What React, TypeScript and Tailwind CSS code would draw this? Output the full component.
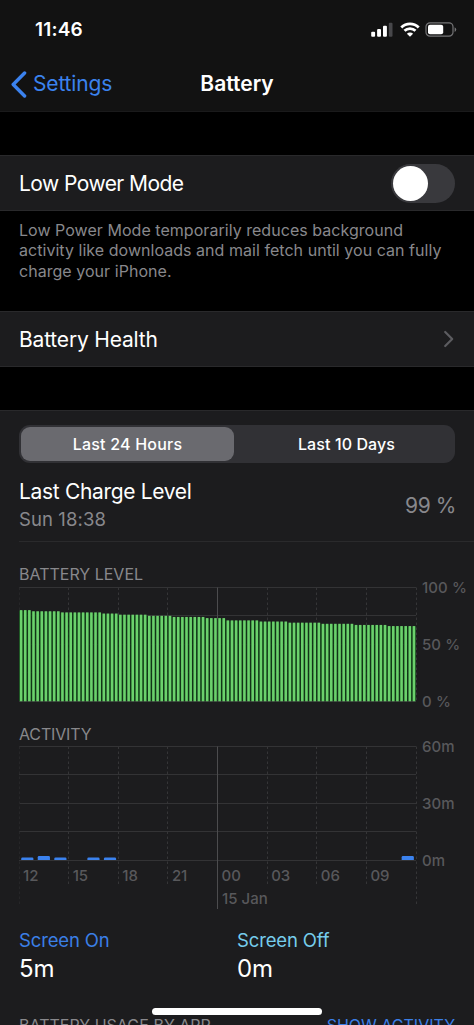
import type { ReactNode } from 'react'

const PLOT_WIDTH = 397
const PLOT_HEIGHT = 114
const HOURS = ['12', '15', '18', '21', '00', '03', '06', '09']

// [level in percent, number of quarter-hour bars]
const LEVELS: [number, number][] = [
  [80, 3],
  [79, 7],
  [78, 10],
  [77, 4],
  [76, 7],
  [75, 6],
  [74, 8],
  [73, 5],
  [71, 8],
  [70, 7],
  [69, 8],
  [68, 8],
  [67, 8],
  [66, 7],
]

const ACTIVITY = [
  { hour: 0, height: 2.4 },
  { hour: 1, height: 4 },
  { hour: 2, height: 2.4 },
  { hour: 4, height: 2.4 },
  { hour: 5, height: 2.4 },
  { hour: 23, height: 4 },
]

const bars = LEVELS.flatMap(([level, count]) =>
  Array.from({ length: count }, () => level),
)

function StatusIcons() {
  return (
    <div className="flex items-center">
      <svg width="22" height="15" viewBox="0 0 22 15" fill="white">
        <rect x="0.2" y="9.7" width="3.9" height="5" rx="1" />
        <rect x="6.1" y="7" width="3.9" height="7.7" rx="1" />
        <rect x="12" y="3.8" width="3.9" height="10.9" rx="1" />
        <rect x="17.8" y="0.7" width="3.7" height="14" rx="1" fill="#47474a" />
      </svg>
      <svg className="ml-[7px]" width="20" height="15" viewBox="0 0 20 15">
        <g fill="none" stroke="white" strokeWidth="2.8">
          <path d="M1.3 5.4a12.3 12.3 0 0 1 17.4 0" />
          <path d="M4.5 8.8a7.8 7.8 0 0 1 11 0" />
        </g>
        <path d="M10 14.8l-3.1-3.1a4.4 4.4 0 0 1 6.2 0z" fill="white" />
      </svg>
      <svg className="ml-[5px]" width="32" height="15" viewBox="0 0 32 15">
        <rect
          x="1"
          y="0.8"
          width="27"
          height="13.4"
          rx="4"
          fill="none"
          stroke="#747476"
          strokeWidth="1.2"
        />
        <rect x="3" y="2.8" width="15.2" height="9.4" rx="2" fill="white" />
        <path d="M29.6 5.2a2.6 2.6 0 0 1 0 4.8z" fill="#747476" />
      </svg>
    </div>
  )
}

function Grid({ tail }: { tail?: boolean }) {
  return (
    <g strokeWidth="1">
      {[0, 1, 2, 3, 4].map((i) => (
        <path
          key={i}
          d={`M0 ${Math.floor((i * PLOT_HEIGHT) / 4) + 0.5}h${PLOT_WIDTH}`}
          stroke="#333335"
        />
      ))}
      {[0, 1, 2, 3, 4, 5, 6, 7, 8].map((i) => {
        const x = Math.floor((i * PLOT_WIDTH) / 8) + 0.5
        const end = !tail
          ? PLOT_HEIGHT
          : i === 4
            ? 163
            : i === 0 || i === 8
              ? 159
              : 140
        return (
          <path
            key={i}
            d={`M${x} 0.5V${end}`}
            stroke={i === 4 ? '#4c4c4e' : i === 0 ? '#262628' : '#353537'}
            strokeDasharray={i === 4 ? undefined : '2.5 2.5'}
          />
        )
      })}
    </g>
  )
}

function AxisLabels({ labels }: { labels: string[] }) {
  return (
    <div className="-mt-2 ml-[5px] flex h-[132px] flex-col justify-between text-[15px] leading-[18px] font-medium tracking-[0.1px] text-[#58585b]">
      {labels.map((label) => (
        <span key={label}>{label}</span>
      ))}
    </div>
  )
}

function Row({ children }: { children: ReactNode }) {
  return (
    <div className="flex h-14 items-center justify-between border-y border-[#29292b] bg-[#1c1c1e] px-[19px] text-[21px] text-white">
      {children}
    </div>
  )
}

function BatteryLevelChart() {
  const pitch = PLOT_WIDTH / bars.length
  return (
    <div className="flex h-[115px]">
      <svg width="398" height="115" viewBox="0 0 398 115">
        <Grid />
        {bars.map((level, i) => {
          const height = (level / 100) * PLOT_HEIGHT
          return (
            <g key={i}>
              <rect
                x={i * pitch}
                y={PLOT_HEIGHT - height + 1}
                width={pitch}
                height={height - 1}
                fill="#103c17"
              />
              <rect
                x={i * pitch + 0.8}
                y={PLOT_HEIGHT - height + 0.3}
                width={2.6}
                height={height}
                fill="#6bd16c"
              />
            </g>
          )
        })}
      </svg>
      <AxisLabels labels={['100 %', '50 %', '0 %']} />
    </div>
  )
}

function ActivityChart() {
  return (
    <div className="relative h-[164px]">
      <svg
        className="absolute top-0 left-0"
        width="398"
        height="164"
        viewBox="0 0 398 164"
      >
        <Grid tail />
        {ACTIVITY.map(({ hour, height }) => {
          const x = (hour * PLOT_WIDTH) / 24 + 2.2
          return (
            <path
              key={hour}
              d={`M${x} 114v${1.2 - height}q0 -1.2 1.2 -1.2h9.8q1.2 0 1.2 1.2v${height - 1.2}z`}
              fill="#3b82ee"
            />
          )
        })}
      </svg>
      <div className="flex h-[121px] pl-[398px]">
        <AxisLabels labels={['60m', '30m', '0m']} />
      </div>
      <div className="grid w-[397px] grid-cols-8 text-[15px] leading-[18px] font-medium text-[#58585b]">
        {HOURS.map((hour) => (
          <span key={hour} className="pl-1">
            {hour}
          </span>
        ))}
      </div>
      <p className="mt-[5px] pl-[203px] text-[15px] leading-[18px] font-medium text-[#58585b]">
        15 Jan
      </p>
    </div>
  )
}

export default function App() {
  return (
    <div className="relative flex h-[1025px] w-[474px] flex-col overflow-hidden bg-black font-['Inter',sans-serif] whitespace-nowrap">
      {/* --- Status bar and title --- */}
      <header className="h-28 shrink-0 border-b border-[#1a1a1b] bg-[#121212]">
        <div className="flex h-[58px] items-center justify-between pr-[17px] pl-[35px]">
          <span className="pt-[2px] text-[19px] font-semibold tracking-[0.2px] text-white">
            11:46
          </span>
          <StatusIcons />
        </div>
        <div className="grid h-[52px] grid-cols-[1fr_auto_1fr] items-center text-[21px]">
          <div className="flex items-center pl-[11px] text-[#3b82ee]">
            <svg
              width="16"
              height="27"
              viewBox="0 0 16 27"
              fill="none"
              stroke="currentColor"
              strokeWidth="3.4"
              strokeLinecap="round"
              strokeLinejoin="round"
            >
              <path d="M13.6 2L2.2 13.5l11.4 11.5" />
            </svg>
            <span className="ml-[6px] tracking-[-0.15px]">Settings</span>
          </div>
          <h1 className="font-semibold text-white">Battery</h1>
        </div>
      </header>

      <main>
        <div className="mt-[43px]">
          <Row>
            <span className="pt-[2px] tracking-[-0.55px]">Low Power Mode</span>
            <div className="flex h-[39px] w-16 items-center rounded-full bg-[#39393d] pl-[2px]">
              <div className="size-[35px] rounded-full bg-white" />
            </div>
          </Row>
        </div>
        <p className="mt-[9px] px-[19px] text-[16px] leading-[20.3px] tracking-[0.04px] text-[#88888c]">
          Low Power Mode temporarily reduces background
          <br />
          activity like downloads and mail fetch until you can fully
          <br />
          charge your iPhone.
        </p>
        <div className="mt-[30px]">
          <Row>
            <span className="pt-[2px] tracking-[-0.18px]">Battery Health</span>
            <svg
              width="12"
              height="18"
              viewBox="0 0 12 18"
              fill="none"
              stroke="#5c5c60"
              strokeWidth="2.2"
              strokeLinecap="round"
              strokeLinejoin="round"
            >
              <path d="M2.2 2l7 7-7 7" />
            </svg>
          </Row>
        </div>

        {/* --- Usage panel --- */}
        <section className="mt-[43px] h-[620px] border-t border-[#29292b] bg-[#1c1c1e] pt-[14px] pl-[19px]">
          <div className="flex h-[38px] w-[436px] rounded-[11px] bg-[#313135] p-[2px] text-[16px] font-medium text-white">
            <div className="flex w-[213px] items-center justify-center rounded-[9px] bg-[#6a6a6f] tracking-[0.22px]">
              Last 24 Hours
            </div>
            <div className="flex flex-1 items-center justify-center pl-[6px] tracking-[0.1px]">
              Last 10 Days
            </div>
          </div>

          <div className="mr-[19px] flex h-[78px] items-center justify-between pt-2 text-[21px]">
            <div>
              <p className="leading-[28px] tracking-[-0.33px] text-white">
                Last Charge Level
              </p>
              <p className="text-[18.5px] leading-[27px] tracking-[0.1px] text-[#88888c]">
                Sun 18:38
              </p>
            </div>
            <span className="-mr-px tracking-[-0.4px] text-[#88888c]">
              99 %
            </span>
          </div>
          <div className="h-px bg-[#2a2a2c]" />

          <h2 className="mt-[22px] mb-[3px] text-[16px] leading-[20px] text-[#88888c]">
            BATTERY LEVEL
          </h2>
          <BatteryLevelChart />
          <h2 className="mt-[22px] mb-[2px] text-[16px] leading-[20px] tracking-[-0.15px] text-[#88888c]">
            ACTIVITY
          </h2>
          <ActivityChart />

          <div className="mt-[18px] grid grid-cols-[218px_1fr] text-[18.5px] leading-[24px] tracking-[-0.15px]">
            <span className="text-[#3b7fe6]">Screen On</span>
            <span className="text-[#76cdec]">Screen Off</span>
            <span className="mt-px text-[24px] leading-[32px] text-white">
              5m
            </span>
            <span className="mt-px text-[24px] leading-[32px] text-white">
              0m
            </span>
          </div>
          <div className="mt-[30px] mr-[19px] flex justify-between text-[16px] leading-[20px]">
            <span className="text-[#88888c]">BATTERY USAGE BY APP</span>
            <span className="text-[#3b7fe6]">SHOW ACTIVITY</span>
          </div>
        </section>
      </main>

      {/* Home indicator */}
      <div className="absolute top-[1008px] left-[152px] h-[7px] w-[170px] rounded-full bg-white" />
    </div>
  )
}
